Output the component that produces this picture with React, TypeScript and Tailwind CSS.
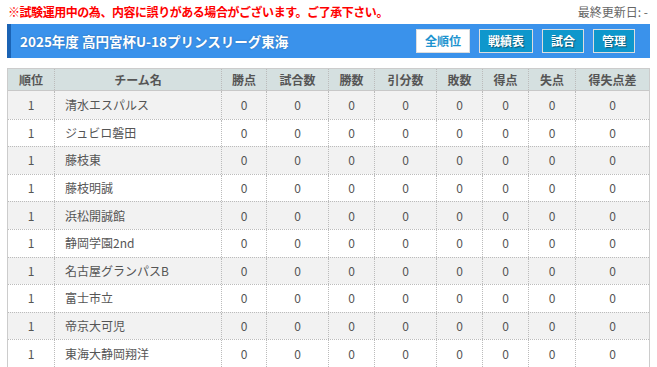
const cols = ['順位', 'チーム名', '勝点', '試合数', '勝数', '引分数', '敗数', '得点', '失点', '得失点差'];

const teams = [
  '清水エスパルス',
  'ジュビロ磐田',
  '藤枝東',
  '藤枝明誠',
  '浜松開誠館',
  '静岡学園2nd',
  '名古屋グランパスB',
  '富士市立',
  '帝京大可児',
  '東海大静岡翔洋',
];

const grid = 'grid grid-cols-[46px_167px_45px_62px_46px_62px_46px_46px_47px_1fr]';

export default function App() {
  return (
    <div
      className="w-[657px] h-[367px] overflow-hidden bg-white text-[12px] text-[#555]"
      style={{ fontFamily: '"Noto Sans CJK JP", "Noto Sans", sans-serif' }}
    >
      {/* notice line */}
      <div className="flex items-center justify-between pl-[8px] pr-[9px] h-[24px]">
        <p className="font-bold text-[#f00] tracking-[-0.45px]">※試験運用中の為、内容に誤りがある場合がございます。ご了承下さい。</p>
        <p className="text-[#666]">最終更新日: -</p>
      </div>

      {/* league header */}
      <div className="mx-[7px] h-[34px] bg-[#3a92eb] border-l-[4px] border-[#1b63b4] flex items-center justify-between pl-[9px] pr-[15px]">
        <h1 className="text-white font-bold text-[13.5px] [text-shadow:0_0_2px_rgba(0,0,0,0.25)]">
          2025年度 高円宮杯U-18プリンスリーグ東海
        </h1>
        <div className="flex gap-[9px]">
          <button className="h-[24px] px-[8px] bg-white border border-[#ddd] text-[#1c93cf] font-bold">全順位</button>
          <button className="h-[24px] px-[8px] bg-[#0e97cc] border border-[#ddd] text-white font-bold [text-shadow:1px_1px_1px_rgba(0,0,0,0.45)]">戦績表</button>
          <button className="h-[24px] px-[8px] bg-[#0e97cc] border border-[#ddd] text-white font-bold [text-shadow:1px_1px_1px_rgba(0,0,0,0.45)]">試合</button>
          <button className="h-[24px] px-[8px] bg-[#0e97cc] border border-[#ddd] text-white font-bold [text-shadow:1px_1px_1px_rgba(0,0,0,0.45)]">管理</button>
        </div>
      </div>

      {/* standings table */}
      <div className="mx-[7px] mt-[10px] border-x border-t border-[#ccc]">
        <div className={`${grid} h-[22px] bg-[#d5e0e0] border-b border-[#c8c8c8] font-bold`}>
          {cols.map((c, i) => (
            <div key={c} className={`flex items-center justify-center ${i > 0 ? 'border-l border-dotted border-[#bbb]' : ''}`}>
              {c}
            </div>
          ))}
        </div>
        {teams.map((t, r) => (
          <div
            key={t}
            className={`${grid} h-[27.6px] ${r % 2 === 0 ? 'bg-[#f2f2f2]' : 'bg-white'} ${r > 0 ? 'border-t border-dotted border-[#bbb]' : ''}`}
          >
            <div className="flex items-center justify-center">1</div>
            <div className="flex items-center pl-[10px] border-l border-dotted border-[#bbb]">{t}</div>
            {Array.from({ length: 8 }).map((_, i) => (
              <div key={i} className="flex items-center justify-center border-l border-dotted border-[#bbb]">0</div>
            ))}
          </div>
        ))}
      </div>
    </div>
  );
}
